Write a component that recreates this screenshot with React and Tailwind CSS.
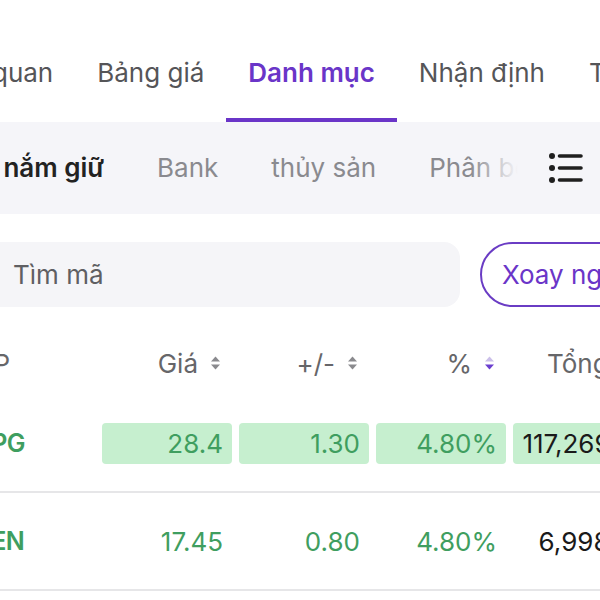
import { useState } from "react";

const TABS = ["Tổng quan", "Bảng giá", "Danh mục", "Nhận định", "Tin tức"];
const FILTERS = ["Đang nắm giữ", "Bank", "thủy sản", "Phân bổ"];

const ROWS = [
  { sym: "HPG", price: "28.4", chg: "1.30", pct: "4.80%", total: "117,269,000", hl: true },
  { sym: "GEN", price: "17.45", chg: "0.80", pct: "4.80%", total: "6,998,400", hl: false },
];

function SortIcon({ active }) {
  return (
    <svg width="11" height="16" viewBox="0 0 11 16" className="shrink-0">
      <path d="M5.5 1.5 L10 6.5 L1 6.5 Z" fill={active ? "#cbbfe9" : "#8a8a8e"} />
      <path d="M1 9.5 L10 9.5 L5.5 14.5 Z" fill={active ? "#6b3fcf" : "#8a8a8e"} />
    </svg>
  );
}

function ListIcon() {
  return (
    <svg width="36" height="32" viewBox="0 0 36 32">
      <circle cx="4" cy="4" r="3" fill="#1f1f1f" />
      <circle cx="4" cy="16" r="3" fill="#1f1f1f" />
      <circle cx="4" cy="28" r="3" fill="#1f1f1f" />
      <path d="M11.5 4 H33 M11.5 16 H33 M11.5 28 H33" stroke="#1f1f1f" strokeWidth="3.6" strokeLinecap="round" />
    </svg>
  );
}

export default function App() {
  const [tab, setTab] = useState("Danh mục");
  const [filter, setFilter] = useState("Đang nắm giữ");

  return (
    <div className="w-[600px] h-[600px] overflow-hidden bg-white font-['Inter',sans-serif] whitespace-nowrap">
      <div className="flex -ml-[99px]">
        {TABS.map((t) => (
          <button
            key={t}
            onClick={() => setTab(t)}
            className={
              "px-[22px] pt-[57px] pb-[29px] text-[26px] leading-[32px] border-b-[4px] " +
              (t === tab ? "border-[#6a35c8] text-[#6a35c8] font-semibold" : "border-transparent text-[#555558]")
            }
          >
            {t}
          </button>
        ))}
      </div>

      <div className="relative h-[92px] bg-[#f5f5f9] flex items-center overflow-hidden">
        <div className="flex items-center gap-[53px] -ml-[69px]">
          {FILTERS.map((f) => (
            <button
              key={f}
              onClick={() => setFilter(f)}
              className={
                "text-[26px] leading-[32px] " +
                (f === filter ? "font-semibold text-[#222]" : "text-[#8a8a8f]")
              }
            >
              {f}
            </button>
          ))}
        </div>
        <div className="absolute right-0 top-0 h-full w-[130px] flex items-center justify-end pr-[16px] bg-[linear-gradient(to_right,rgba(245,245,249,0)_0px,#f5f5f9_48px)]">
          <ListIcon />
        </div>
      </div>

      <div className="flex items-center gap-[20px] mt-[28px]">
        <div className="-ml-[20px] w-[480px] h-[65px] shrink-0 rounded-[16px] bg-[#f5f5f8] flex items-center pl-[33px] text-[26px] text-[#5f5f63]">
          Tìm mã
        </div>
        <button className="h-[65px] shrink-0 rounded-full border-2 border-[#6a3cc4] px-[20px] text-[26px] text-[#6a35c8]">
          Xoay ngang
        </button>
      </div>

      <div className="flex items-center gap-[7px] mt-[24px] h-[64px] text-[26px] text-[#666669]">
        <div className="w-[95px] shrink-0">
          <span className="-ml-[71px] inline-block">Mã CP</span>
        </div>
        {[
          ["Giá", false],
          ["+/-", false],
          ["%", true],
        ].map(([label, active]) => (
          <div key={label} className="w-[130px] shrink-0 flex items-center justify-end gap-[12px] pr-[11px]">
            <span>{label}</span>
            <SortIcon active={active} />
          </div>
        ))}
        <div className="w-[200px] shrink-0 flex items-center gap-[12px] pl-[34px]">
          <span>Tổng giá trị</span>
          <SortIcon />
        </div>
      </div>

      {ROWS.map((r) => (
        <div key={r.sym} className="flex items-center gap-[7px] h-[98px] border-b-2 border-[#e6e6e8] text-[26px]">
          <div className="w-[95px] shrink-0">
            <span className="-ml-[27px] inline-block text-[25px] tracking-[-0.5px] font-semibold text-[#3f9e5f]">{r.sym}</span>
          </div>
          {[r.price, r.chg, r.pct].map((v, i) => (
            <div
              key={i}
              className={
                "w-[130px] h-[41px] shrink-0 rounded-[4px] flex items-center justify-end pr-[9px] text-[#3f9e5f] " +
                (r.hl ? "bg-[#c6efcf]" : "")
              }
            >
              {v}
            </div>
          ))}
          <div
            className={
              "w-[162px] h-[41px] shrink-0 rounded-[4px] flex items-center justify-end pr-[9px] text-[#1a1a1a] " +
              (r.hl ? "bg-[#c6efcf]" : "")
            }
          >
            {r.total}
          </div>
        </div>
      ))}
    </div>
  );
}
